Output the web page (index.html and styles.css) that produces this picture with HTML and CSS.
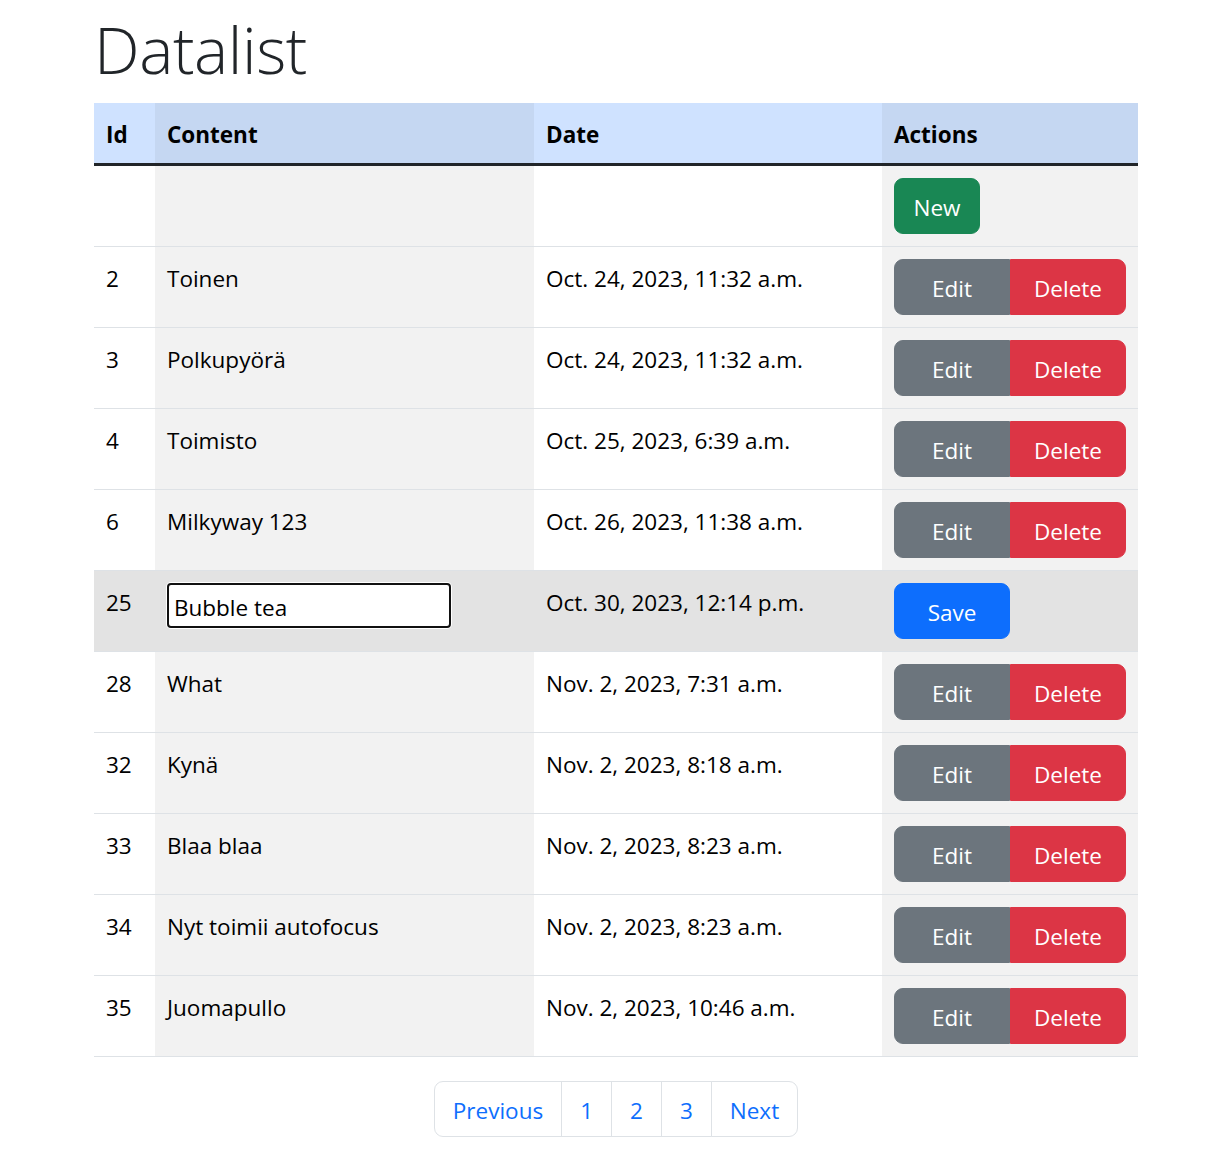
FILE: index.html
```html
<!DOCTYPE html>
<html lang="fi">
<head>
<meta charset="utf-8">
<title>Datalist</title>
<link rel="stylesheet" href="styles.css">
</head>
<body>
<div class="container">
  <h1 class="title">Datalist</h1>
  <table class="table">
    <thead>
      <tr>
        <th class="c-id">Id</th>
        <th class="c-content">Content</th>
        <th class="c-date">Date</th>
        <th class="c-actions">Actions</th>
      </tr>
    </thead>
    <tbody>
      <tr>
        <td></td><td></td><td></td>
        <td class="cell-tight"><button class="btn btn-success">New</button></td>
      </tr>
      <tr>
        <td>2</td><td>Toinen</td><td>Oct. 24, 2023, 11:32 a.m.</td>
        <td class="cell-tight"><div class="btn-group"><button class="btn btn-secondary">Edit</button><button class="btn btn-danger">Delete</button></div></td>
      </tr>
      <tr>
        <td>3</td><td>Polkupyörä</td><td>Oct. 24, 2023, 11:32 a.m.</td>
        <td class="cell-tight"><div class="btn-group"><button class="btn btn-secondary">Edit</button><button class="btn btn-danger">Delete</button></div></td>
      </tr>
      <tr>
        <td>4</td><td>Toimisto</td><td>Oct. 25, 2023, 6:39 a.m.</td>
        <td class="cell-tight"><div class="btn-group"><button class="btn btn-secondary">Edit</button><button class="btn btn-danger">Delete</button></div></td>
      </tr>
      <tr>
        <td>6</td><td>Milkyway 123</td><td>Oct. 26, 2023, 11:38 a.m.</td>
        <td class="cell-tight"><div class="btn-group"><button class="btn btn-secondary">Edit</button><button class="btn btn-danger">Delete</button></div></td>
      </tr>
      <tr class="active">
        <td>25</td><td class="cell-tight"><input class="edit-input" type="text" value="Bubble tea"></td><td>Oct. 30, 2023, 12:14 p.m.</td>
        <td class="cell-tight"><button class="btn btn-primary btn-wide">Save</button></td>
      </tr>
      <tr>
        <td>28</td><td>What</td><td>Nov. 2, 2023, 7:31 a.m.</td>
        <td class="cell-tight"><div class="btn-group"><button class="btn btn-secondary">Edit</button><button class="btn btn-danger">Delete</button></div></td>
      </tr>
      <tr>
        <td>32</td><td>Kynä</td><td>Nov. 2, 2023, 8:18 a.m.</td>
        <td class="cell-tight"><div class="btn-group"><button class="btn btn-secondary">Edit</button><button class="btn btn-danger">Delete</button></div></td>
      </tr>
      <tr>
        <td>33</td><td>Blaa blaa</td><td>Nov. 2, 2023, 8:23 a.m.</td>
        <td class="cell-tight"><div class="btn-group"><button class="btn btn-secondary">Edit</button><button class="btn btn-danger">Delete</button></div></td>
      </tr>
      <tr>
        <td>34</td><td>Nyt toimii autofocus</td><td>Nov. 2, 2023, 8:23 a.m.</td>
        <td class="cell-tight"><div class="btn-group"><button class="btn btn-secondary">Edit</button><button class="btn btn-danger">Delete</button></div></td>
      </tr>
      <tr>
        <td>35</td><td>Juomapullo</td><td>Nov. 2, 2023, 10:46 a.m.</td>
        <td class="cell-tight"><div class="btn-group"><button class="btn btn-secondary">Edit</button><button class="btn btn-danger">Delete</button></div></td>
      </tr>
    </tbody>
  </table>
  <nav class="pager">
    <ul class="pagination">
      <li><a href="#">Previous</a></li>
      <li><a href="#">1</a></li>
      <li><a href="#">2</a></li>
      <li><a href="#">3</a></li>
      <li><a href="#">Next</a></li>
    </ul>
  </nav>
</div>
</body>
</html>
```
FILE: styles.css
```css
* { box-sizing: border-box; }

body {
  margin: 0;
  font-family: "Open Sans", "Noto Sans", "Liberation Sans", sans-serif;
  font-size: 22.5px;
  line-height: 36px;
  color: #212529;
  background: #fff;
}

.container {
  width: 1044px;
  margin: 0 0 0 94px;
  padding-top: 6px;
}

.title {
  height: 86px;
  margin: 0 0 11px;
  font-size: 64.5px;
  font-weight: 300;
  line-height: 86px;
  color: #212529;
  letter-spacing: -0.4px;
}

.table {
  width: 1044px;
  table-layout: fixed;
  border-collapse: collapse;
  color: #000;
  margin-bottom: 24px;
}

.table th,
.table td {
  padding: 14px 12px 10px;
  text-align: left;
  vertical-align: top;
  white-space: nowrap;
}
.table td.cell-tight { padding: 12px; }

.c-id { width: 61px; }
.c-content { width: 379px; }
.c-date { width: 348px; }
.c-actions { width: 256px; }

.table thead th {
  font-weight: 700;
  background: #cfe2ff;
  border-bottom: 3px solid #212529;
}
.table thead th:nth-child(2n) { background: #c5d7f2; }

.table tbody td {
  background: #fff;
  border-bottom: 1px solid #dee2e6;
  height: 81px;
}
.table tbody td:nth-child(2n) { background: #f2f2f2; }
.table tbody tr.active td { background: #e3e3e3; }

.btn {
  display: inline-block;
  height: 56px;
  padding: 11px 18px 7px;
  border: 1px solid transparent;
  border-radius: 9px;
  font-family: inherit;
  font-size: 22.5px;
  line-height: 36px;
  color: #fff;
  text-align: center;
  cursor: pointer;
}
.btn-success { background: #198754; border-color: #198754; width: 86px; padding-left: 0; padding-right: 0; }
.btn-secondary { background: #6c757d; border-color: #6c757d; }
.btn-danger { background: #dc3545; border-color: #dc3545; }
.btn-primary { background: #0d6efd; border-color: #0d6efd; }
.btn-wide { width: 116px; padding-left: 0; padding-right: 0; }

.btn-group { display: flex; }
.btn-group .btn { width: 116px; padding-left: 0; padding-right: 0; }
.btn-group .btn:first-child { border-radius: 9px 0 0 9px; }
.btn-group .btn:last-child { border-radius: 0 9px 9px 0; }

.edit-input {
  display: block;
  width: 284px;
  height: 45px;
  padding: 3px 5px 0;
  border: 2px solid #111;
  border-radius: 4px;
  box-shadow: 0 0 0 1px #fff;
  font-family: inherit;
  font-size: 22.5px;
  line-height: 36px;
  color: #000;
  background: #fff;
  outline: none;
}

.pager { display: flex; justify-content: center; }

.pagination {
  display: flex;
  list-style: none;
  margin: 0;
  padding: 0;
}
.pagination li + li { margin-left: -1px; }
.pagination a {
  display: block;
  height: 56px;
  padding: 11px 18px 7px;
  border: 1px solid #dee2e6;
  color: #0d6efd;
  text-decoration: none;
  line-height: 36px;
  background: #fff;
}
.pagination li:first-child a { border-radius: 9px 0 0 9px; }
.pagination li:last-child a { border-radius: 0 9px 9px 0; }
```
